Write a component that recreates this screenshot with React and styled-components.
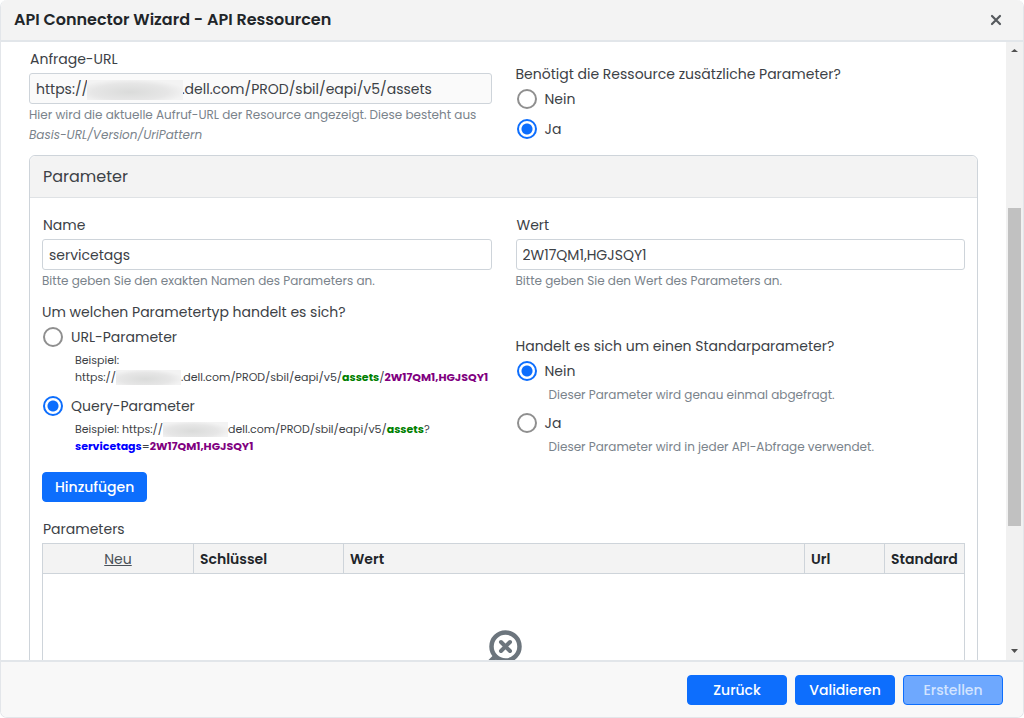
import React, { useState } from "react";
import styled, { createGlobalStyle } from "styled-components";

const GlobalStyle = createGlobalStyle`
  * {
    box-sizing: border-box;
  }

  body {
    margin: 0;
    background: #fff;
    color: #3c4146;
    font: 400 14px/20px Poppins, Inter, "Open Sans", sans-serif;
  }

  button,
  input {
    font: inherit;
    color: inherit;
  }
`;

const Dialog = styled.section`
  display: flex;
  flex-direction: column;
  height: 100vh;
  border: 1px solid #e3e6ea;
  border-top: 0;
  border-radius: 7px;
  overflow: hidden;
`;

const Header = styled.header`
  display: flex;
  align-items: center;
  justify-content: space-between;
  flex: none;
  height: 42px;
  padding: 0 19px 0 13px;
  background: #f3f3f3;
  border-bottom: 2px solid #e2e6ea;
`;

const Title = styled.h1`
  margin: 0;
  color: #212529;
  font-size: 16px;
  font-weight: 600;
`;

const CloseButton = styled.button`
  display: flex;
  padding: 2px;
  border: 0;
  background: none;
  color: #55595d;
  cursor: pointer;
`;

const Main = styled.div`
  display: flex;
  flex: 1;
  min-height: 0;
`;

const Content = styled.main`
  flex: 1;
  min-width: 0;
  padding: 6px 28px 0;
  overflow: hidden;
`;

const Columns = styled.div`
  display: grid;
  grid-template-columns: 1fr 1fr;
  gap: 24px;
  margin-bottom: ${props => props.$space}px;
`;

const Column = styled.div`
  min-width: 0;
  align-self: ${props => (props.$bottom ? "end" : "start")};
`;

const Label = styled.label`
  display: block;
  margin-bottom: 3px;
  padding-left: 1px;
  line-height: 22px;
`;

const InputFrame = styled.div`
  position: relative;
`;

const Input = styled.input`
  display: block;
  width: 100%;
  height: 31px;
  padding: 2px 6px 0;
  border: 1px solid #ced4da;
  border-radius: 3px;
  background: ${props => (props.readOnly ? "#fafafa" : "#fff")};
  outline: 0;
`;

const Help = styled.div`
  padding-top: 1px;
  color: #7a838b;
  font-size: 12px;
`;

const smudge = `
  background: radial-gradient(ellipse at 45% 60%, #dadbda, #e6e6e6 50%, #f3f3f3 75%);
`;

const InputMask = styled.span`
  position: absolute;
  top: 7px;
  left: 58px;
  width: 96px;
  height: 20px;
  ${smudge}
`;

const Mask = styled.span`
  display: inline-block;
  width: 65px;
  height: 15px;
  vertical-align: middle;
  ${smudge}
`;

const Group = styled.fieldset`
  min-width: 0;
  margin: 0;
  padding: 0 0 ${props => props.$space || 0}px;
  border: 0;
`;

const Question = styled.legend`
  padding: 0;
  line-height: 20px;
`;

const RadioLabel = styled.label`
  display: flex;
  align-items: center;
  gap: 8px;
  height: 30px;
  padding-left: 1px;
  cursor: pointer;
`;

const Radio = styled.input`
  appearance: none;
  width: 20px;
  height: 20px;
  margin: 0;
  border: 2px solid #8f8f8f;
  border-radius: 50%;
  background: #fff;

  &:checked {
    border-color: #0d6efd;
    background: radial-gradient(circle, #0d6efd 5px, #fff 6px);
  }
`;

const Note = styled.div`
  padding-left: 33px;
  line-height: 17px;
  font-size: ${props => (props.$example ? 11 : 12)}px;
  color: ${props => (props.$example ? "inherit" : "#7a838b")};
  white-space: ${props => (props.$example ? "nowrap" : "normal")};

  & + label {
    margin-top: 5px;
  }
`;

const Part = styled.b`
  color: ${props => props.$color};
`;

const Card = styled.section`
  border: 1px solid #ced4da;
  border-radius: 6px;
`;

const CardTitle = styled.h2`
  margin: 0;
  padding: 10px 13px;
  border-bottom: 1px solid #dfe2e5;
  border-radius: 6px 6px 0 0;
  background: #f3f3f3;
  font-size: 16px;
  font-weight: 400;
  line-height: 21px;
`;

const CardBody = styled.div`
  padding: 16px 12px;
`;

const Button = styled.button`
  min-width: ${props => (props.$wide ? 100 : 0)}px;
  height: 30px;
  padding: 0 12px;
  border: 1px solid #0d6efd;
  border-radius: 4px;
  background: #0d6efd;
  color: #fff;
  font-weight: 500;
  cursor: pointer;

  &:disabled {
    background: #6ea8fe;
    color: #d3e4ff;
    cursor: default;
  }
`;

const TableTitle = styled.div`
  margin: 16px 0 3px;
  padding-left: 1px;
  line-height: 22px;
`;

const Table = styled.table`
  width: 100%;
  table-layout: fixed;
  border-collapse: collapse;
  border: 1px solid #ced4da;
`;

const Th = styled.th`
  width: ${props => props.$width || "auto"};
  height: 30px;
  padding: 0 6px;
  border: 1px solid #ced4da;
  background: #f3f3f3;
  color: #212529;
  font-weight: 600;
  text-align: ${props => (props.$center ? "center" : "left")};
`;

const NewLink = styled.a`
  color: #495057;
  font-weight: 400;
`;

const EmptyCell = styled.td`
  height: 160px;
  padding: 56px 0 0;
  text-align: center;
  vertical-align: top;
`;

const Scrollbar = styled.div`
  display: flex;
  flex-direction: column;
  align-items: center;
  flex: none;
  width: 17px;
  background: #f1f1f1;
`;

const Arrow = styled.svg`
  flex: none;
  width: 17px;
  height: 17px;
  fill: #505050;
`;

const Thumb = styled.div`
  flex: 319;
  width: 13px;
  background: #c1c1c1;
`;

const Track = styled.div`
  flex: ${props => props.$size};
`;

const Footer = styled.footer`
  display: flex;
  align-items: center;
  justify-content: flex-end;
  gap: 8px;
  flex: none;
  height: 57px;
  padding: 0 20px;
  border-top: 2px solid #e2e6ea;
  background: #f8f8f8;
`;

const CloseIcon = () => (
  <svg width="12" height="12" viewBox="0 0 12 12" aria-hidden="true">
    <path
      d="M2 2l8 8M10 2l-8 8"
      fill="none"
      stroke="currentColor"
      strokeWidth="2.2"
      strokeLinecap="round"
    />
  </svg>
);

const NoResultIcon = () => (
  <svg width="37" height="37" viewBox="0 0 37 37" aria-hidden="true">
    <g fill="none" stroke="#6c757d" strokeLinecap="round">
      <circle cx="20.5" cy="16.5" r="14" strokeWidth="4.5" />
      <path d="M16 12l9 9M25 12l-9 9" strokeWidth="4" />
      <path d="M9.500 27.500L3 34" strokeWidth="5" />
    </g>
  </svg>
);

const TextField = ({ id, label, help, mask, ...input }) => (
  <Column>
    <Label htmlFor={id}>{label}</Label>
    <InputFrame>
      <Input id={id} type="text" {...input} />
      {mask && <InputMask />}
    </InputFrame>
    <Help>{help}</Help>
  </Column>
);

const RadioOption = ({ name, label, note, example, ...input }) => (
  <>
    <RadioLabel>
      <Radio type="radio" name={name} {...input} />
      {label}
    </RadioLabel>
    {note && <Note $example={example}>{note}</Note>}
  </>
);

const App = () => {
  const [name, setName] = useState("servicetags");
  const [value, setValue] = useState("2W17QM1,HGJSQY1");

  return (
    <>
      <GlobalStyle />
      <Dialog role="dialog" aria-labelledby="title">
        <Header>
          <Title id="title">API Connector Wizard - API Ressourcen</Title>
          <CloseButton type="button" aria-label="Schließen">
            <CloseIcon />
          </CloseButton>
        </Header>
        <Main>
          <Content>
            <Columns $space={10}>
              <TextField
                id="url"
                label="Anfrage-URL"
                readOnly
                mask
                value={`https://${" ".repeat(25)}.dell.com/PROD/sbil/eapi/v5/assets`}
                help={
                  <>
                    Hier wird die aktuelle Aufruf-URL der Resource angezeigt.
                    Diese besteht aus <i>Basis-URL/Version/UriPattern</i>
                  </>
                }
              />
              <Column $bottom>
                <Group $space={1}>
                  <Question>
                    Benötigt die Ressource zusätzliche Parameter?
                  </Question>
                  <RadioOption name="extra" label="Nein" />
                  <RadioOption name="extra" label="Ja" defaultChecked />
                </Group>
              </Column>
            </Columns>
            <Card>
              <CardTitle>Parameter</CardTitle>
              <CardBody>
                <Columns $space={11}>
                  <TextField
                    id="name"
                    label="Name"
                    value={name}
                    onChange={e => setName(e.target.value)}
                    help="Bitte geben Sie den exakten Namen des Parameters an."
                  />
                  <TextField
                    id="value"
                    label="Wert"
                    value={value}
                    onChange={e => setValue(e.target.value)}
                    help="Bitte geben Sie den Wert des Parameters an."
                  />
                </Columns>
                <Columns $space={17}>
                  <Column>
                    <Group>
                      <Question>
                        Um welchen Parametertyp handelt es sich?
                      </Question>
                      <RadioOption
                        name="type"
                        label="URL-Parameter"
                        example
                        note={
                          <>
                            Beispiel:
                            <br />
                            https://
                            <Mask />
                            .dell.com/PROD/sbil/eapi/v5/
                            <Part $color="green">assets</Part>/
                            <Part $color="purple">{value}</Part>
                          </>
                        }
                      />
                      <RadioOption
                        name="type"
                        label="Query-Parameter"
                        defaultChecked
                        example
                        note={
                          <>
                            Beispiel: https://
                            <Mask />
                            dell.com/PROD/sbil/eapi/v5/
                            <Part $color="green">assets</Part>?
                            <br />
                            <Part $color="blue">{name}</Part>=
                            <Part $color="purple">{value}</Part>
                          </>
                        }
                      />
                    </Group>
                  </Column>
                  <Column $bottom>
                    <Group>
                      <Question>
                        Handelt es sich um einen Standarparameter?
                      </Question>
                      <RadioOption
                        name="standard"
                        label="Nein"
                        defaultChecked
                        note="Dieser Parameter wird genau einmal abgefragt."
                      />
                      <RadioOption
                        name="standard"
                        label="Ja"
                        note="Dieser Parameter wird in jeder API-Abfrage verwendet."
                      />
                    </Group>
                  </Column>
                </Columns>
                <Button type="button">Hinzufügen</Button>
                <TableTitle id="parameters">Parameters</TableTitle>
                <Table aria-labelledby="parameters">
                  <thead>
                    <tr>
                      <Th $width="151px" $center>
                        <NewLink href="#neu">Neu</NewLink>
                      </Th>
                      <Th $width="150px">Schlüssel</Th>
                      <Th>Wert</Th>
                      <Th $width="80px">Url</Th>
                      <Th $width="80px">Standard</Th>
                    </tr>
                  </thead>
                  <tbody>
                    <tr>
                      <EmptyCell colSpan={5}>
                        <NoResultIcon />
                      </EmptyCell>
                    </tr>
                  </tbody>
                </Table>
              </CardBody>
            </Card>
          </Content>
          <Scrollbar aria-hidden="true">
            <Arrow viewBox="0 0 17 17">
              <path d="M5 10h7L8.500 7z" />
            </Arrow>
            <Track $size={149} />
            <Thumb />
            <Track $size={117} />
            <Arrow viewBox="0 0 17 17">
              <path d="M5 6h7L8.500 10z" />
            </Arrow>
          </Scrollbar>
        </Main>
        <Footer>
          <Button type="button" $wide>
            Zurück
          </Button>
          <Button type="button" $wide>
            Validieren
          </Button>
          <Button type="button" $wide disabled>
            Erstellen
          </Button>
        </Footer>
      </Dialog>
    </>
  );
};

export default App;
